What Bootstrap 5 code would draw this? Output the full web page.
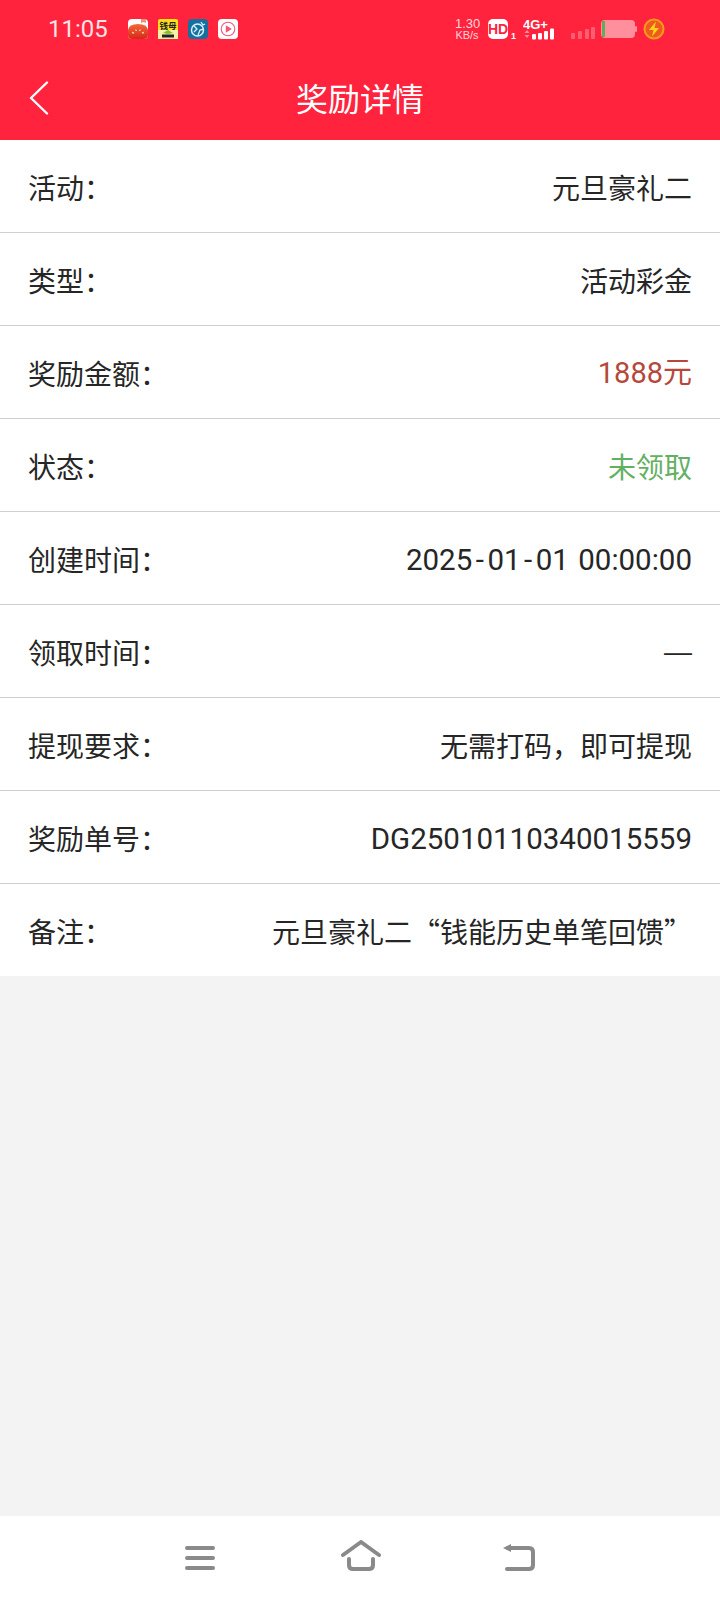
<!DOCTYPE html>
<html lang="zh-CN">

<head>
    <meta charset="UTF-8">
    <meta name="viewport" content="width=device-width, initial-scale=1.0">
    <title>奖励详情</title>
    <link href="https://cdn.jsdelivr.net/npm/bootstrap@5.3.0/dist/css/bootstrap.min.css" rel="stylesheet">
    <style>
        body {
            background-color: #f3f3f3;
            font-family: "Noto Sans CJK SC", sans-serif;
            color: #262626;
        }

        .app-page {
            height: 1600px;
        }

        .top-area {
            background-color: #ff233d;
            color: #fff;
            height: 140px;
            flex-shrink: 0;
        }

        .status-row {
            height: 58px;
            padding-left: 48px;
            padding-right: 55px;
        }

        .status-time {
            width: 70px;
            margin-right: 10px;
            font-family: Roboto, sans-serif;
            font-size: 24px;
            line-height: 1;
            color: #ffe3e6;
        }

        .app-icons {
            gap: 10px;
        }

        .app-icon {
            width: 20px;
            height: 20px;
            display: block;
        }

        .speed-text {
            width: 24px;
            margin-right: 9px;
            font-family: "Liberation Sans", sans-serif;
            font-size: 11px;
            line-height: 10px;
            text-align: center;
            color: #ffd5da;
        }

        .speed-text span {
            display: block;
        }

        .speed-text .speed-num {
            font-size: 13px;
            line-height: 12px;
        }

        .hd-icon {
            margin-right: 7px;
        }

        .net-icon {
            margin-right: 15px;
        }

        .weak-bars {
            margin-right: 6px;
        }

        .battery-icon {
            margin-right: 6px;
        }

        .title-row {
            height: 82px;
            padding-bottom: 4px;
        }

        .back-btn {
            left: 29px;
            top: 23px;
            line-height: 0;
        }

        .page-title {
            font-size: 32px;
            font-weight: 400;
            margin: 0;
        }

        .info-row {
            height: 93px;
            padding: 1px 28px 0;
            font-size: 28px;
            font-weight: 400;
            border-bottom: 1px solid #cfcfcf;
            flex-shrink: 0;
        }

        .info-row:last-child {
            height: 92px;
            border-bottom: 0;
        }

        .latin-value {
            font-family: Roboto, "Noto Sans CJK SC", sans-serif;
            font-size: 29.5px;
            padding-top: 3px;
        }

        .date-value {
            word-spacing: 2px;
        }

        .date-dash {
            margin: 0 3.5px;
        }

        .empty-value {
            font-family: "Liberation Sans", sans-serif;
        }

        .value-amount {
            color: #b5483a;
            font-size: 29px;
        }

        .value-state {
            color: #63b063;
        }

        .bottom-nav {
            height: 84px;
            padding-top: 3px;
            padding-left: 2px;
            flex-shrink: 0;
        }
    </style>
</head>

<body>
    <main class="app-page d-flex flex-column">
        <header class="top-area">
            <div class="status-row d-flex align-items-center">
                <div class="status-time">11:05</div>
                <div class="app-icons d-flex">
                    <svg class="app-icon" viewBox="0 0 20 20">
                        <defs>
                            <linearGradient id="tomatoFill" x1="0" y1="0" x2="0" y2="1">
                                <stop offset="0" stop-color="#f26a3a" />
                                <stop offset="1" stop-color="#d8261a" />
                            </linearGradient>
                        </defs>
                        <rect width="20" height="20" rx="4" fill="#fff" />
                        <path d="M0 11q1-6 10-6t10 6v5a4 4 0 0 1-4 4H4a4 4 0 0 1-4-4z" fill="url(#tomatoFill)" />
                        <path d="M13 0h5v4l-2.500-1L13 4z" fill="#e9907f" />
                        <path d="M4 13.500l2 .5M7.500 10.500l1 1.500M12.500 10.500l-1 1.500M16 13.500l-2 .5" stroke="#ffd0a0" stroke-width="1.300" />
                    </svg>
                    <svg class="app-icon" viewBox="0 0 20 20">
                        <rect width="20" height="20" rx="2" fill="#ffe11a" />
                        <text x="10" y="9.500" text-anchor="middle" font-family="Noto Sans CJK SC, sans-serif" font-size="8.500" font-weight="700" fill="#222">钱母</text>
                        <rect y="11" width="20" height="9" fill="#f4f2a8" />
                        <path d="M5 14l5-3 5 3-5 1z" fill="#8dbb2e" />
                        <rect x="4" y="15.500" width="12" height="3" fill="#222" />
                    </svg>
                    <svg class="app-icon" viewBox="0 0 20 20">
                        <rect width="20" height="20" rx="4" fill="#15709f" />
                        <circle cx="9.500" cy="11" r="6" fill="none" stroke="#d8f2ff" stroke-width="1.500" />
                        <path d="M6 7l3 3-3 3M10 16l2-5 4-1M13 3l2 3 2-1" fill="none" stroke="#d8f2ff" stroke-width="1.300" />
                    </svg>
                    <svg class="app-icon" viewBox="0 0 20 20">
                        <rect width="20" height="20" rx="4" fill="#fff" />
                        <circle cx="10" cy="10" r="6.800" fill="none" stroke="#f0577a" stroke-width="1.100" />
                        <path d="M7.800 6.300l6 3.700-6 3.700z" fill="#f0577a" />
                    </svg>
                </div>
                <div class="d-flex align-items-center ms-auto">
                    <div class="speed-text"><span class="speed-num">1.30</span><span>KB/s</span></div>
                    <svg class="hd-icon" width="28" height="22" viewBox="0 0 28 22">
                        <rect y="1" width="20" height="20" rx="5" fill="#fff" />
                        <text x="10" y="16" text-anchor="middle" font-family="Liberation Sans, sans-serif" font-size="14" font-weight="700" fill="#ff233d">HD</text>
                        <text x="23" y="21" font-family="Liberation Sans, sans-serif" font-size="9" font-weight="700" fill="#fff">1</text>
                    </svg>
                    <svg class="net-icon" width="33" height="22" viewBox="0 0 33 22">
                        <text x="0" y="11" font-family="Liberation Sans, sans-serif" font-size="13" font-weight="700" fill="#fff">4G+</text>
                        <path d="M4 12l2.500 3H1.500zM1.500 17h5L4 20z" fill="#ff8d9a" />
                        <rect x="9" y="16" width="4" height="5.500" rx="1" fill="#fff" />
                        <rect x="15" y="15" width="4" height="6.500" rx="1" fill="#fff" />
                        <rect x="21" y="13" width="4" height="8.500" rx="1" fill="#fff" />
                        <rect x="27" y="10.500" width="4" height="11" rx="1" fill="#fff" />
                    </svg>
                    <svg class="weak-bars" width="24" height="22" viewBox="0 0 24 22">
                        <rect x="0" y="15" width="4" height="6" rx="1" fill="#ff5f71" />
                        <rect x="7" y="13" width="4" height="8" rx="1" fill="#ff5f71" />
                        <rect x="14" y="11" width="4" height="10" rx="1" fill="#ff5f71" />
                        <rect x="20" y="9" width="4" height="12" rx="1" fill="#ff5f71" />
                    </svg>
                    <svg class="battery-icon" width="36" height="20" viewBox="0 0 36 20">
                        <rect x="0" y="1" width="34" height="18" rx="4" fill="#ff8f9c" />
                        <rect x="34" y="7" width="2" height="6" rx="1" fill="#ff8f9c" />
                        <rect x="1" y="2" width="3" height="16" fill="#5fae57" />
                    </svg>
                    <svg width="22" height="22" viewBox="0 0 22 22">
                        <circle cx="11" cy="11" r="9.500" fill="#ef5a1d" stroke="#f59a1f" stroke-width="2" />
                        <path d="M13 3.500L6 12h4.500L9 18.500l7-8.500h-4.500z" fill="#ffd21e" />
                    </svg>
                </div>
            </div>
            <div class="title-row position-relative d-flex align-items-center justify-content-center">
                <a class="back-btn position-absolute" href="#" aria-label="返回">
                    <svg width="20" height="34" viewBox="0 0 20 34">
                        <path d="M18 1.500L2 17l16 15.500" fill="none" stroke="#fff" stroke-width="2.400" stroke-linecap="round" stroke-linejoin="round" />
                    </svg>
                </a>
                <h1 class="page-title">奖励详情</h1>
            </div>
        </header>

        <section class="bg-white">
            <div class="info-row d-flex justify-content-between align-items-center"><span>活动：</span><span>元旦豪礼二</span></div>
            <div class="info-row d-flex justify-content-between align-items-center"><span>类型：</span><span>活动彩金</span></div>
            <div class="info-row d-flex justify-content-between align-items-center"><span>奖励金额：</span><span class="latin-value value-amount">1888元</span></div>
            <div class="info-row d-flex justify-content-between align-items-center"><span>状态：</span><span class="value-state">未领取</span></div>
            <div class="info-row d-flex justify-content-between align-items-center"><span>创建时间：</span><span class="latin-value date-value">2025<span class="date-dash">-</span>01<span class="date-dash">-</span>01 00:00:00</span></div>
            <div class="info-row d-flex justify-content-between align-items-center"><span>领取时间：</span><span class="empty-value">—</span></div>
            <div class="info-row d-flex justify-content-between align-items-center"><span>提现要求：</span><span>无需打码，即可提现</span></div>
            <div class="info-row d-flex justify-content-between align-items-center"><span>奖励单号：</span><span class="latin-value">DG25010110340015559</span></div>
            <div class="info-row d-flex justify-content-between align-items-center"><span>备注：</span><span>元旦豪礼二“钱能历史单笔回馈”</span></div>
        </section>

        <div class="flex-grow-1"></div>

        <nav class="bottom-nav bg-white d-flex justify-content-center align-items-center">
            <svg width="360" height="40" viewBox="0 0 360 40">
                <g fill="none" stroke="#8a8a8a" stroke-width="4" stroke-linecap="round" stroke-linejoin="round">
                    <path d="M6 8h26M6 18h26M6 28h26" />
                    <path d="M162 15l18-13 18 13M168 19v6q0 4 4 4h16q4 0 4-4v-6" />
                    <path d="M327 8h21q4 0 4 4v13q0 4-4 4h-22" />
                </g>
                <path d="M322 8l8-4v8z" fill="#8a8a8a" />
            </svg>
        </nav>
    </main>

    <script src="https://cdn.jsdelivr.net/npm/bootstrap@5.3.0/dist/js/bootstrap.bundle.min.js"></script>
</body>

</html>
